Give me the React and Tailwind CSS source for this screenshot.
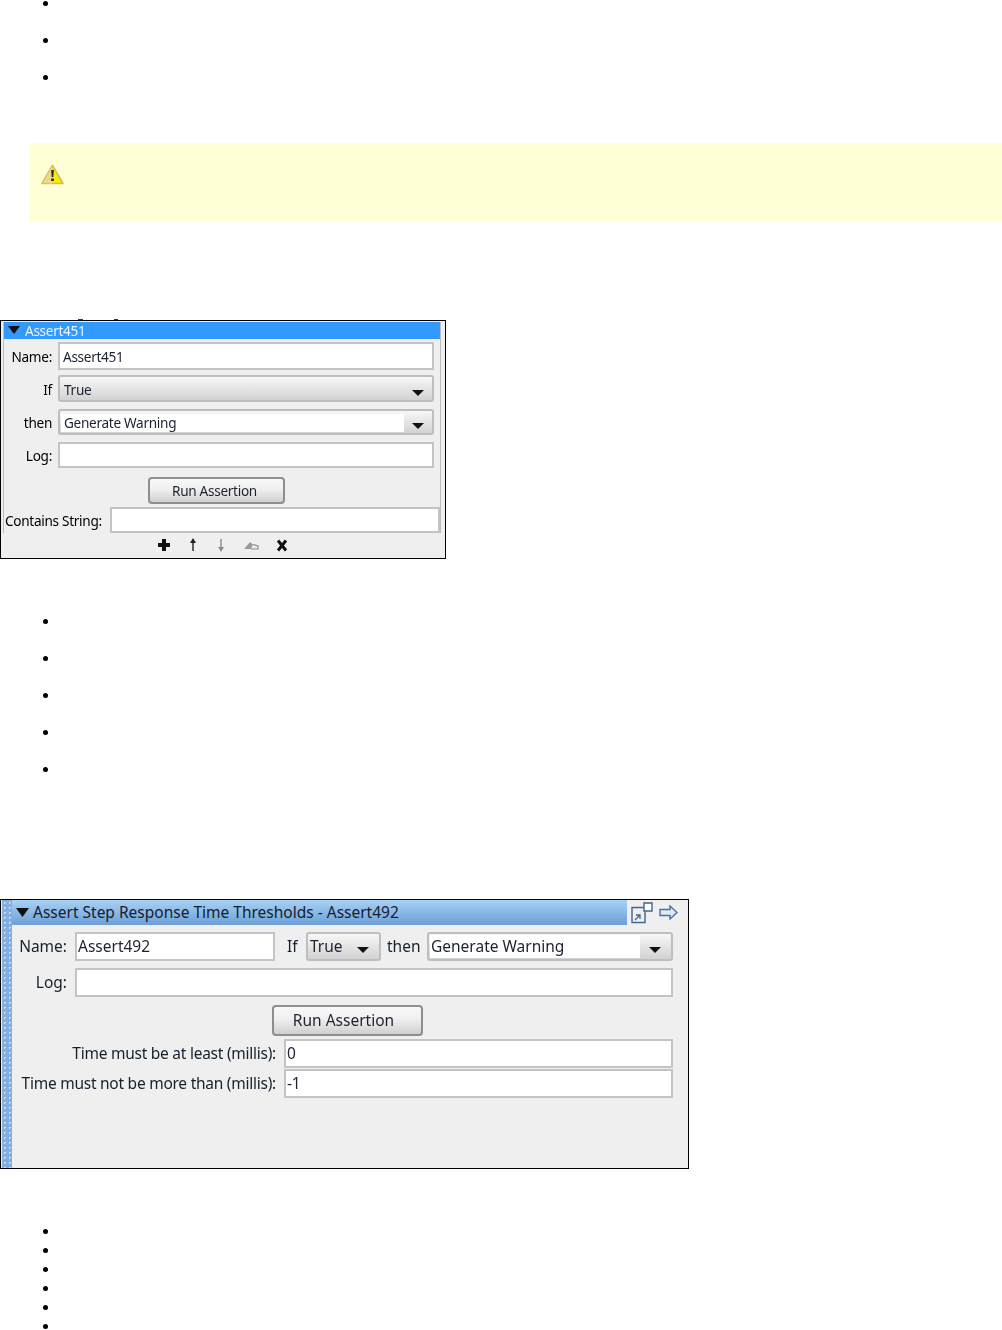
import React from "react";

const Bullets = ({ count, rowClass }) => (
  <ul>
    {Array.from({ length: count }).map((_, i) => (
      <li key={i} className={`flex items-center pl-[43px] ${rowClass}`}>
        <span className="block w-[5px] h-[5px] rounded-full bg-black" />
      </li>
    ))}
  </ul>
);

const Arrow = () => (
  <svg width="12" height="6" viewBox="0 0 12 6" className="shrink-0 mt-[6px]">
    <path d="M0 0h12L6 6z" fill="#111" />
  </svg>
);

const Field = ({ className, children }) => (
  <div className={`flex items-center bg-white border-2 border-[#c4c4c4] text-[#1c2230] ${className}`}>
    {children}
  </div>
);

const Combo = ({ className, label, labelClass, white, arrowClass }) => (
  <div className={`flex items-stretch border-2 border-[#bebebe] rounded-[3px] p-[1px] bg-[linear-gradient(#f7f7f7,#d2d2d2)] text-[#1c2230] ${className}`}>
    <div className={`flex-1 flex items-center ${labelClass} ${white ? "bg-white" : ""}`}>{label}</div>
    <div className={`flex items-center justify-center ${arrowClass}`}>
      <Arrow />
    </div>
  </div>
);

const RunButton = ({ className }) => (
  <div className={`flex items-center justify-center border-2 border-[#8e8e8e] rounded-[4px] bg-[linear-gradient(#f8f8f8,#f0f0f0_45%,#cfcfcf)] text-[#1c2230] ${className}`}>
    Run Assertion
  </div>
);

const Toolbar = () => (
  <div className="flex items-center h-[24px] pl-[156px]">
    <svg width="14" height="14" viewBox="0 0 14 14">
      <path d="M5 1h4v4h4v4H9v4H5V9H1V5h4z" fill="#111" />
    </svg>
    <svg width="10" height="16" viewBox="0 0 10 16" className="ml-[17px]">
      <path d="M5 1L2 6h2.3v8h1.4V6H8z" fill="#222" />
    </svg>
    <svg width="10" height="16" viewBox="0 0 10 16" className="ml-[18px]">
      <path d="M5 15L2 10h2.3V2h1.4v8H8z" fill="#8a8a8a" />
    </svg>
    <svg width="16" height="12" viewBox="0 0 16 12" className="ml-[17px]">
      <path d="M1 10L7 3l3 2.5L8 10z" fill="#9a9a9a" />
      <path d="M8 10h7V7l-5-1.5" fill="none" stroke="#8a8a8a" strokeWidth="1.2" />
    </svg>
    <svg width="12" height="13" viewBox="0 0 12 13" className="ml-[17px]">
      <path d="M2 1.5l8 10M10 1.5l-8 10" stroke="#111" strokeWidth="3" />
    </svg>
  </div>
);

const SmallPanel = () => (
  <div className="relative w-[446px] h-[239px] border border-black bg-[#efefef] text-[13.6px] tracking-[-0.3px] leading-none">
    <span className="absolute left-[77px] -top-[2px] w-[5px] h-[1px] bg-[#333]" />
    <span className="absolute left-[113px] -top-[2px] w-[4px] h-[1px] bg-[#333]" />
    <div className="blur-[0.4px]">
      <div className="ml-[2px] mr-[4px] mt-[1px] h-[211px] border-x border-[#bdbdbd]">
        <div className="flex items-center h-[17px] pt-[1px] bg-[#3399ff] text-[#e8f3ff] pl-[21px] relative">
          <svg width="12" height="8" viewBox="0 0 12 8" className="absolute left-[4px] top-[4px]">
            <path d="M0 0h12L6 8z" fill="#111" />
          </svg>
          Assert451
        </div>
        <div className="flex items-center mt-[3px] h-[28px]">
          <span className="w-[48px] pt-[1px] text-right">Name:</span>
          <Field className="ml-[6px] w-[376px] h-[28px] pl-[3px] pt-[2px]">Assert451</Field>
        </div>
        <div className="flex items-center mt-[5px] h-[27px]">
          <span className="w-[48px] pt-[2px] text-right">If</span>
          <Combo className="ml-[6px] w-[376px] h-[27px] pt-[3px]" labelClass="pl-[3px]" label="True" arrowClass="w-[27px]" />
        </div>
        <div className="flex items-center mt-[7px] h-[26px]">
          <span className="w-[48px] pt-[1px] text-right">then</span>
          <Combo className="ml-[6px] w-[376px] h-[26px] pt-[3px]" labelClass="pl-[3px]" label="Generate Warning" white arrowClass="w-[27px]" />
        </div>
        <div className="flex items-center mt-[7px] h-[26px]">
          <span className="w-[48px] pt-[1px] text-right">Log:</span>
          <Field className="ml-[6px] w-[376px] h-[26px]" />
        </div>
        <RunButton className="ml-[144px] mt-[9px] w-[137px] h-[27px] pr-[4px] pt-[1px]" />
        <div className="flex items-center mt-[3px] h-[26px]">
          <span className="w-[100px] pl-[1px] pt-[1px] whitespace-nowrap">Contains String:</span>
          <Field className="ml-[6px] w-[330px] h-[26px]" />
        </div>
      </div>
      <Toolbar />
    </div>
  </div>
);

const LargePanel = () => (
  <div className="flex w-[689px] h-[270px] border border-black bg-[#efefef] text-[15.5px] leading-none">
    <div className="w-[10px] ml-[1px] shrink-0 bg-[#84aee0] bg-[radial-gradient(circle,#cfe2f6_1px,transparent_1px)] bg-[length:5px_5px]" />
    <div className="flex-1 min-w-0 blur-[0.4px]">
      <div className="flex items-stretch h-[25px]">
        <div className="w-[615px] flex items-center pl-[21px] relative bg-[linear-gradient(#a8d1f6,#6d9fd6)] text-[#14202e] whitespace-nowrap">
          <svg width="13" height="9" viewBox="0 0 13 9" className="absolute left-[4px] top-[8px]">
            <path d="M0 0h13L6.5 9z" fill="#111" />
          </svg>
          Assert Step Response Time Thresholds - Assert492
        </div>
        <div className="flex items-center pl-[4px]">
          <svg width="22" height="22" viewBox="0 0 22 22">
            <path d="M13 5.5H1v15h13V9" fill="none" stroke="#44658f" strokeWidth="1.4" />
            <path d="M13 1h8v8h-8z" fill="#fff" stroke="#44658f" strokeWidth="1.4" />
            <path d="M4 18l5-5M5 13h4v4" fill="none" stroke="#44658f" strokeWidth="1.3" />
          </svg>
          <svg width="19" height="15" viewBox="0 0 19 15" className="ml-[6px]">
            <path d="M1 4.5h10V1l7 6.5-7 6.5v-3.5H1z" fill="#dfe9f6" stroke="#4a6fa8" strokeWidth="1.4" />
          </svg>
        </div>
      </div>
      <div className="flex items-center mt-[7px] h-[29px]">
        <span className="w-[55px] text-right text-[#14202e]">Name:</span>
        <Field className="ml-[8px] w-[200px] h-[29px] pl-[1px]">Assert492</Field>
        <span className="ml-[12px] w-[13px] text-[#14202e]">If</span>
        <Combo className="ml-[6px] w-[75px] h-[29px]" labelClass="pl-[1px]" label="True" arrowClass="w-[30px]" />
        <span className="ml-[6px] w-[33px] text-[#14202e] whitespace-nowrap">then</span>
        <Combo className="ml-[7px] w-[246px] h-[29px]" labelClass="pl-[1px]" label="Generate Warning" white arrowClass="w-[30px]" />
      </div>
      <div className="flex items-center mt-[7px] h-[29px]">
        <span className="w-[55px] text-right text-[#14202e]">Log:</span>
        <Field className="ml-[8px] w-[598px] h-[29px]" />
      </div>
      <RunButton className="ml-[260px] mt-[8px] w-[151px] h-[31px] pr-[8px]" />
      <div className="flex items-center mt-[3px] h-[29px] tracking-[-0.25px]">
        <span className="w-[264px] text-right text-[#14202e] whitespace-nowrap">Time must be at least (millis):</span>
        <Field className="ml-[8px] w-[389px] h-[29px] pl-[1px]">0</Field>
      </div>
      <div className="flex items-center mt-[1px] h-[29px] tracking-[-0.25px]">
        <span className="w-[264px] text-right text-[#14202e] whitespace-nowrap">Time must not be more than (millis):</span>
        <Field className="ml-[8px] w-[389px] h-[29px] pl-[1px]">-1</Field>
      </div>
    </div>
  </div>
);

export default function App() {
  return (
    <div className="h-[1330px] overflow-hidden bg-white font-['Noto_Sans','DejaVu_Sans',sans-serif]">
      <div className="-mt-[15px]">
        <Bullets count={3} rowClass="h-[37px]" />
      </div>
      <div className="ml-[30px] mt-[47px] h-[78px] bg-[#ffffd6] pl-[11px] pt-[21px]">
        <svg width="23" height="21" viewBox="0 0 23 21">
          <path d="M11.5 1.5L22 19.5H1z" fill="#f4ee00" stroke="#d9b860" strokeWidth="1.6" strokeLinejoin="round" />
          <path d="M1.8 19L11 2.5v17z" fill="#ecd88a" />
          <path d="M10.2 6h2.6l-.5 7h-1.6zM10.2 14.5h2.6v2.6h-2.6z" fill="#222" />
        </svg>
      </div>
      <div className="mt-[99px]">
        <SmallPanel />
      </div>
      <div className="mt-[44px]">
        <Bullets count={5} rowClass="h-[37px]" />
      </div>
      <div className="mt-[111px]">
        <LargePanel />
      </div>
      <div className="mt-[53px]">
        <Bullets count={6} rowClass="h-[19px]" />
      </div>
    </div>
  );
}
